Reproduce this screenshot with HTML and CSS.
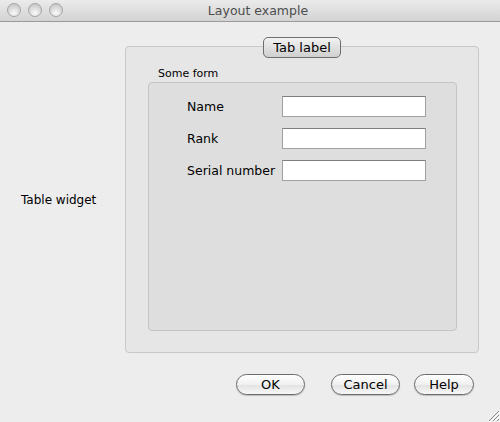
FILE: index.html
```html
<!DOCTYPE html>
<html>
<head>
<meta charset="utf-8">
<link rel="stylesheet" href="styles.css">
</head>
<body>
<div class="window">
  <div class="titlebar">
    <div class="lights">
      <span class="light"></span><span class="light"></span><span class="light"></span>
    </div>
    <div class="title">Layout example</div>
  </div>
  <div class="content">
    <div class="main">
      <div class="side">Table widget</div>
      <div class="panel">
        <div class="tab">Tab label</div>
        <div class="group-title">Some form</div>
        <div class="group">
          <div class="row"><label class="lbl">Name</label><input class="field" type="text"></div>
          <div class="row"><label class="lbl">Rank</label><input class="field" type="text"></div>
          <div class="row"><label class="lbl">Serial number</label><input class="field" type="text"></div>
        </div>
      </div>
    </div>
    <div class="buttons">
      <button class="btn btn-ok">OK</button>
      <button class="btn btn-cancel">Cancel</button>
      <button class="btn btn-help">Help</button>
    </div>
  </div>
  <svg class="grip" width="14" height="14" viewBox="0 0 14 14">
    <path d="M13 3 L3 13 M13 7 L7 13 M13 11 L11 13" stroke="#8a8a8a" stroke-width="1"/>
    <path d="M14 4 L4 14 M14 8 L8 14" stroke="#ffffff" stroke-width="1"/>
  </svg>
</div>
</body>
</html>
```
FILE: styles.css
```css
* { box-sizing: border-box; }
html, body { margin: 0; padding: 0; }
body {
  width: 500px;
  height: 422px;
  overflow: hidden;
  font-family: "DejaVu Sans", "Lucida Grande", sans-serif;
  font-size: 12px;
  color: #000;
  background: #ededed;
}
.window {
  position: relative;
  width: 500px;
  height: 422px;
  background: #ededed;
  display: flex;
  flex-direction: column;
}
.titlebar {
  height: 22px;
  background: linear-gradient(#ebebeb, #d3d3d3);
  border-bottom: 1px solid #9a9a9a;
  display: flex;
  align-items: center;
  position: relative;
}
.lights {
  display: flex;
  gap: 7px;
  padding-left: 7px;
  padding-bottom: 1px;
}
.light {
  width: 14px;
  height: 14px;
  border-radius: 50%;
  background: radial-gradient(circle at 50% 75%, #fafafa 0%, #dedede 45%, #bcbcbc 100%);
  border: 1px solid #a5a5a5;
}
.title {
  position: absolute;
  left: 16px;
  right: 0;
  top: 3px;
  text-align: center;
  font-size: 12.5px;
  color: #4d4d4d;
}
.content {
  flex: 1;
  display: flex;
  flex-direction: column;
}
.main {
  display: flex;
  align-items: center;
  margin-top: 24px;
  height: 307px;
}
.side {
  width: 125px;
  padding-left: 21px;
}
.panel {
  position: relative;
  width: 354px;
  height: 307px;
  background: #e6e6e6;
  border: 1px solid #c8c8c8;
  border-radius: 4px;
  padding: 20px 21px 0 22px;
}
.tab {
  position: absolute;
  top: -10px;
  left: 137px;
  width: 78px;
  height: 21px;
  border: 1px solid #6e6e6e;
  border-radius: 5px;
  background: linear-gradient(#f2f2f2, #cfcfcf);
  text-align: center;
  font-size: 13px;
  line-height: 19px;
}
.group-title {
  font-size: 11px;
  padding-left: 10px;
  height: 15px;
}
.group {
  height: 249px;
  background: #dedede;
  border: 1px solid #c4c4c4;
  border-radius: 4px;
  padding-top: 13px;
  display: flex;
  flex-direction: column;
  gap: 11px;
}
.row {
  display: flex;
  align-items: center;
  height: 21px;
}
.lbl {
  width: 133px;
  padding-left: 38px;
  font-size: 12.5px;
}
.field {
  width: 144px;
  height: 21px;
  margin: 0;
  border: 1px solid #a0a0a0;
  border-top-color: #7e7e7e;
  background: #fff;
  padding: 0;
}
.buttons {
  display: flex;
  justify-content: flex-end;
  padding-right: 26px;
  margin-top: 21px;
}
.btn {
  height: 21px;
  margin: 0;
  padding: 0;
  font-family: "DejaVu Sans", "Lucida Grande", sans-serif;
  font-size: 13px;
  color: #000;
  border: 1px solid #6a6a6a;
  border-radius: 11px;
  background: linear-gradient(#ffffff, #f0f0f0 50%, #e2e2e2 51%, #f7f7f7);
  box-shadow: 0 1px 1px rgba(0,0,0,0.2);
}
.btn-ok { width: 69px; }
.btn-cancel { width: 69px; margin-left: 26px; }
.btn-help { width: 60px; margin-left: 14px; }
.grip {
  position: absolute;
  right: 0;
  bottom: 0;
}
```
